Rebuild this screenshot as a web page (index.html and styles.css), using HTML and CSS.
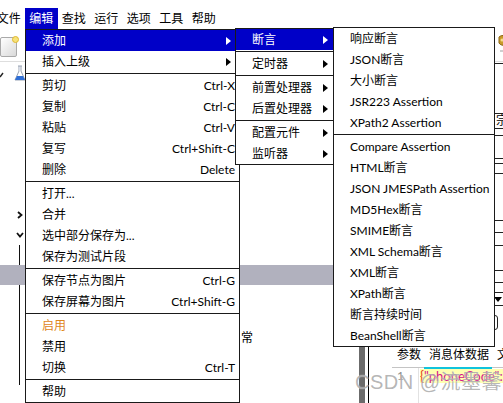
FILE: index.html
```html
<!DOCTYPE html>
<html lang="zh-CN">
<head>
<meta charset="utf-8">
<title>JMeter 编辑菜单</title>
<link rel="stylesheet" href="styles.css">
</head>
<body>
<nav class="menubar">
  <span class="mb-item">文件</span>
  <span class="mb-item active">编辑</span>
  <span class="mb-item">查找</span>
  <span class="mb-item">运行</span>
  <span class="mb-item">选项</span>
  <span class="mb-item">工具</span>
  <span class="mb-item">帮助</span>
</nav>

<div class="toolbar">
  <span class="tb-new"></span>
  <svg class="tb-gold" width="10" height="18" viewBox="0 0 10 18">
    <path d="M1 2 C3 0 7 0 9 2 L9 8 C7 11 3 11 1 8 Z" fill="#c89a2a" stroke="#8a6414" stroke-width="1"/>
    <circle cx="4" cy="5" r="1.5" fill="#f4dc8c"/>
    <rect x="2" y="15" width="4" height="2" fill="#cfcfcf"/>
  </svg>
</div>

<div class="panes">
  <div class="tree">
    <div class="row">
      <svg class="tick" width="4" height="6" viewBox="0 0 4 6"><path d="M0 5 L3 1" stroke="#222" stroke-width="1.4"/></svg>
      <svg class="flask" width="12" height="17" viewBox="0 0 12 17">
        <path d="M4 1 H8 M5 1 V6 L1 15 H11 L7 6 V1" fill="none" stroke="#9aa4b4" stroke-width="1"/>
        <path d="M3 11 H9 L11 15 H1 Z" fill="#2f6fd6"/>
        <path d="M5.5 2 V6" stroke="#d8dde8" stroke-width="1"/>
      </svg>
    </div>
    <div class="row"></div>
    <div class="row"></div>
    <div class="row"></div>
    <div class="row"></div>
    <div class="row"></div>
    <div class="row"></div>
    <div class="row">
      <svg class="chev-r" width="6" height="8" viewBox="0 0 6 8"><path d="M1 1 L4.5 4 L1 7" fill="none" stroke="#111" stroke-width="1.8"/></svg>
    </div>
    <div class="row">
      <svg class="chev-d" width="8" height="6" viewBox="0 0 8 6"><path d="M1 1 L4 4.5 L7 1" fill="none" stroke="#111" stroke-width="1.8"/></svg>
    </div>
    <div class="row guide"></div>
    <div class="row selected"></div>
    <div class="row guide"></div>
    <div class="row guide"></div>
    <div class="row guide"><span class="far-text">常</span></div>
    <div class="row guide"></div>
    <div class="row guide"></div>
  </div>
  <div class="divider"></div>
  <div class="detail">
    <div class="rows">
      <div class="r"></div>
      <div class="r"><span class="cut-text">宗</span></div>
      <div class="r"></div>
      <div class="r"></div>
      <div class="r"></div>
      <div class="r"></div>
      <div class="r"></div>
      <div class="r"></div>
      <div class="r"></div>
      <div class="r"></div>
      <div class="r"></div>
      <div class="r"></div>
      <div class="r"><span class="combo-arrow"></span></div>
      <div class="r last"><span class="input-box"></span></div>
    </div>
    <div class="tabs">
      <span class="tab">参数</span>
      <span class="tab active">消息体数据</span>
      <span class="tab">文件上传</span>
    </div>
    <div class="editor">
      <div class="gutter">1</div>
      <div class="code"><div class="code-line"><span class="brace">{</span><span class="str">"phoneCode"</span><span class="str">:"86",</span></div></div>
    </div>
  </div>
</div>

<div class="watermark">CSDN @流墨馨</div>

<div class="menu menu-main">
  <div class="mi sub hl"><span class="label">添加</span><span class="arrow"></span></div>
  <div class="mi sub"><span class="label">插入上级</span><span class="arrow"></span></div>
  <div class="sep"></div>
  <div class="mi"><span class="label">剪切</span><span class="key">Ctrl-X</span></div>
  <div class="mi"><span class="label">复制</span><span class="key">Ctrl-C</span></div>
  <div class="mi"><span class="label">粘贴</span><span class="key">Ctrl-V</span></div>
  <div class="mi"><span class="label">复写</span><span class="key">Ctrl+Shift-C</span></div>
  <div class="mi"><span class="label">删除</span><span class="key">Delete</span></div>
  <div class="sep"></div>
  <div class="mi"><span class="label">打开...</span></div>
  <div class="mi"><span class="label">合并</span></div>
  <div class="mi"><span class="label">选中部分保存为...</span></div>
  <div class="mi"><span class="label">保存为测试片段</span></div>
  <div class="sep"></div>
  <div class="mi"><span class="label">保存节点为图片</span><span class="key">Ctrl-G</span></div>
  <div class="mi"><span class="label">保存屏幕为图片</span><span class="key">Ctrl+Shift-G</span></div>
  <div class="sep"></div>
  <div class="mi"><span class="label orange">启用</span></div>
  <div class="mi"><span class="label">禁用</span></div>
  <div class="mi"><span class="label">切换</span><span class="key">Ctrl-T</span></div>
  <div class="sep"></div>
  <div class="mi"><span class="label">帮助</span></div>
</div>

<div class="menu menu-sub1">
  <div class="mi sub hl"><span class="label">断言</span><span class="arrow"></span></div>
  <div class="sep"></div>
  <div class="mi sub"><span class="label">定时器</span><span class="arrow"></span></div>
  <div class="sep"></div>
  <div class="mi sub"><span class="label">前置处理器</span><span class="arrow"></span></div>
  <div class="mi sub"><span class="label">后置处理器</span><span class="arrow"></span></div>
  <div class="sep"></div>
  <div class="mi sub"><span class="label">配置元件</span><span class="arrow"></span></div>
  <div class="mi sub"><span class="label">监听器</span><span class="arrow"></span></div>
</div>

<div class="menu menu-sub2">
  <div class="mi"><span class="label">响应断言</span></div>
  <div class="mi"><span class="label">JSON断言</span></div>
  <div class="mi"><span class="label">大小断言</span></div>
  <div class="mi"><span class="label">JSR223 Assertion</span></div>
  <div class="mi"><span class="label">XPath2 Assertion</span></div>
  <div class="sep"></div>
  <div class="mi"><span class="label">Compare Assertion</span></div>
  <div class="mi"><span class="label">HTML断言</span></div>
  <div class="mi"><span class="label">JSON JMESPath Assertion</span></div>
  <div class="mi"><span class="label">MD5Hex断言</span></div>
  <div class="mi"><span class="label">SMIME断言</span></div>
  <div class="mi"><span class="label">XML Schema断言</span></div>
  <div class="mi"><span class="label">XML断言</span></div>
  <div class="mi"><span class="label">XPath断言</span></div>
  <div class="mi"><span class="label">断言持续时间</span></div>
  <div class="mi"><span class="label">BeanShell断言</span></div>
</div>
</body>
</html>
```

FILE: styles.css
```css
* { box-sizing: border-box; }
html, body { margin: 0; padding: 0; }
body {
  width: 503px;
  height: 403px;
  overflow: hidden;
  position: relative;
  background: #fff;
  color: #000;
  font-family: "Lato", "Noto Sans CJK SC", sans-serif;
  font-size: 12px;
}

/* menu bar */
.menubar {
  display: flex;
  height: 29px;
  padding-top: 8px;
  margin-left: -7.5px;
}
.mb-item {
  height: 21px;
  line-height: 21px;
  padding: 0 4.25px;
  white-space: nowrap;
}
.mb-item.active { background: #0000c8; color: #fff; }

/* toolbar */
.toolbar {
  display: flex;
  align-items: flex-start;
  height: 33px;
  padding-top: 8px;
  border-bottom: 1px solid #dedede;
  white-space: nowrap;
}
.tb-new {
  position: relative;
  flex: none;
  width: 17px;
  height: 20px;
  border: 1px solid #a9a9a9;
  border-radius: 2px;
  background: linear-gradient(135deg, #ffffff, #d9d9d9);
}
.tb-new::after {
  content: "";
  position: absolute;
  right: -3px;
  top: -2px;
  width: 5px;
  height: 5px;
  border-radius: 50%;
  background: #f6e27a;
  border: 1px solid #e0b830;
}
.tb-gold { flex: none; margin-left: 481px; margin-top: -2px; }

/* panes */
.panes {
  display: grid;
  grid-template-columns: 359px 6px 1fr;
  height: 341px;
}
.tree { padding-top: 3px; }
.row {
  display: flex;
  align-items: center;
  height: 20px;
}
.row.guide {
  background: linear-gradient(#111, #111) 19px 0 / 1px 100% no-repeat;
}
.row.selected { background: #b1b1be; }
.tick { margin-left: 0; }
.flask { margin-left: 10px; margin-top: -4px; }
.chev-r { margin-left: 17px; }
.chev-d { margin-left: 16px; }
.far-text { margin-left: 241px; margin-top: 2px; }

.divider { background: #6b6b6b; }

.detail {
  margin-left: 3px;
  margin-top: 1px;
  border-left: 1px solid #000;
  border-top: 1px solid #222;
  width: 200px;
  display: flex;
  flex-direction: column;
}
.rows {
  display: grid;
  grid-template-rows: 50px 15px 7px 23px 5px 10px 47px 12px 13px 25px 12px 10px 13px 41px;
}
.r {
  border-bottom: 1px solid #222;
  display: flex;
  align-items: center;
  position: relative;
}
.r.last { border-bottom: none; align-items: flex-start; }
.cut-text { margin-left: 127px; line-height: 14px; }
.combo-arrow {
  margin-left: 125px;
  width: 0;
  height: 0;
  border-left: 4px solid transparent;
  border-right: 4px solid transparent;
  border-top: 5px solid #000;
}
.input-box {
  margin-top: 9px;
  margin-left: 20px;
  width: 109px;
  height: 15px;
  border: 1px solid #222;
  border-radius: 3px;
}

.tabs {
  display: flex;
  height: 21px;
  margin-left: 23px;
  border-bottom: 1px solid #c4c4c4;
  white-space: nowrap;
}
.tab {
  padding: 0 3px 0 5px;
  line-height: 16px;
  height: 21px;
}
.tab.active {
  padding-right: 3px;
  border-bottom: 2px solid #10c4dc;
  height: 22px;
}

.editor {
  display: flex;
  margin-left: 23px;
  flex: 1;
}
.gutter {
  width: 27px;
  text-align: right;
  padding-right: 14px;
  color: #8a8a8a;
  border-right: 1px solid #e2e2e2;
  line-height: 14px;
  padding-top: 1px;
}
.code { flex: 1; padding-top: 1px; padding-left: 1px; }
.code-line {
  background: #ffffb0;
  height: 14px;
  line-height: 14px;
  font-size: 13px;
  white-space: nowrap;
}
.brace { color: #e2401a; }
.str { color: #d4158a; }

.watermark {
  position: absolute;
  left: 355px;
  top: 366px;
  font-family: "Liberation Sans", "Noto Sans CJK SC", sans-serif;
  font-size: 20px;
  letter-spacing: 0.5px;
  color: rgba(120, 120, 120, 0.55);
  text-shadow: 0 0 1px rgba(255, 255, 255, 0.9);
  white-space: nowrap;
}

/* popup menus */
.menu {
  position: absolute;
  background: #fff;
  border: 1px solid #1a1a1a;
}
.menu-main { left: 25px; top: 29px; width: 215px; }
.menu-sub1 { left: 235px; top: 28px; width: 102px; }
.menu-sub2 { left: 333px; top: 27px; width: 162px; }

.mi {
  display: flex;
  align-items: center;
  height: 21px;
  line-height: 21px;
  padding: 0 4px 0 16px;
  white-space: nowrap;
}
.mi.sub { padding-right: 8px; }
.mi .label { flex: 1; }
.mi .key { flex: none; }
.mi.hl { background: #0000c8; color: #fff; }
.orange { color: #e0861a; }

.arrow {
  flex: none;
  width: 0;
  height: 0;
  border-left: 5px solid #000;
  border-top: 4px solid transparent;
  border-bottom: 4px solid transparent;
}
.mi.hl .arrow { border-left-color: #fff; }

.sep {
  height: 1px;
  margin: 1px 0;
  background: #1a1a1a;
}
```
